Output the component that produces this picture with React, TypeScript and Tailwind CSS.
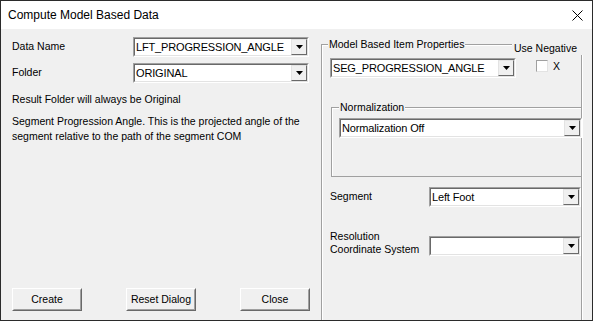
import React from "react";

const FONT = { fontFamily: '"Liberation Sans", Arial, sans-serif' };

function Arrow() {
  return (
    <svg width="7" height="4" viewBox="0 0 7 4" className="block">
      <polygon points="0,0 7,0 3.5,4" fill="#000" />
    </svg>
  );
}

type ComboProps = {
  text?: string;
  className?: string;
};

// classic sunken combo box with raised drop button
function Combo({ text = "", className = "" }: ComboProps) {
  return (
    <div
      className={`h-[20px] border border-t-[#a0a0a0] border-l-[#a0a0a0] border-b-white border-r-white ${className}`}
    >
      <div className="flex h-full border border-t-[#696969] border-l-[#696969] border-b-[#e3e3e3] border-r-[#e3e3e3] bg-white">
        <div className="flex-1 pl-[1px] text-[11px] tracking-[-0.15px] leading-[16px] text-black whitespace-nowrap overflow-hidden">
          {text}
        </div>
        <div className="w-[16px] h-full border border-t-[#e3e3e3] border-l-[#e3e3e3] border-b-[#696969] border-r-[#696969] bg-[#f0f0f0] flex items-center justify-center">
          <Arrow />
        </div>
      </div>
    </div>
  );
}

function Button({ label }: { label: string }) {
  return (
    <div className="w-[70px] h-[23px] border border-t-white border-l-white border-b-[#696969] border-r-[#696969]">
      <div className="h-full border border-transparent border-b-[#a0a0a0] border-r-[#a0a0a0] bg-[#f0f0f0] flex items-center justify-center text-[10.5px] text-black">
        {label}
      </div>
    </div>
  );
}

export default function App() {
  return (
    <div className="w-[594px] h-[323px] bg-white" style={FONT}>
      <div className="w-[593px] h-[321px] border border-[#2b2b2b] flex flex-col overflow-hidden">
        {/* Title bar */}
        <div className="h-[28px] shrink-0 bg-white flex items-center justify-between pl-[7px] pr-[8px]">
          <span className="text-[12px] text-black">Compute Model Based Data</span>
          <svg width="11" height="11" viewBox="0 0 11 11" className="mr-[1px]">
            <path d="M0.5 0.5 L10.5 10.5 M10.5 0.5 L0.5 10.5" stroke="#000" strokeWidth="1" />
          </svg>
        </div>

        {/* Body */}
        <div className="flex-1 bg-[#f0f0f0] flex overflow-hidden">
          {/* Left column */}
          <div className="w-[320px] shrink-0 flex flex-col pl-[11px] pt-[8px] pb-[9px] text-[10.5px] text-black">
            <div className="flex items-center h-[20px]">
              <span className="w-[121px]">Data Name</span>
              <Combo text="LFT_PROGRESSION_ANGLE" className="w-[176px]" />
            </div>
            <div className="flex items-center h-[20px] mt-[6px]">
              <span className="w-[121px]">Folder</span>
              <Combo text="ORIGINAL" className="w-[176px]" />
            </div>
            <p className="mt-[9px] leading-[14px]">Result Folder will always be Original</p>
            <p className="mt-[8px] leading-[15px] w-[300px]">
              Segment Progression Angle. This is the projected angle of the segment relative to the path of
              the segment COM
            </p>
            <div className="mt-auto w-[298px] flex justify-between">
              <Button label="Create" />
              <Button label="Reset Dialog" />
              <Button label="Close" />
            </div>
          </div>

          {/* Model Based Item Properties group */}
          <div className="relative mt-[15px] w-[261px] h-[320px] shrink-0 border border-[#a0a0a0] shadow-[1px_1px_0_#fff,inset_1px_1px_0_#fff] text-[10.5px] text-black">
            <span className="absolute left-[6px] top-[-8px] px-[1px] bg-[#f0f0f0] leading-[14px]">
              Model Based Item Properties
            </span>
            <span className="absolute left-[190px] top-[-4px] w-[72px] pl-[2px] bg-[#f0f0f0] leading-[14px]">
              Use Negative
            </span>

            <div className="flex items-start mt-[13px] ml-[8px]">
              <Combo text="SEG_PROGRESSION_ANGLE" className="w-[186px]" />
              <div className="ml-[20px] mt-[2px] flex items-center">
                <div className="w-[12px] h-[12px] border border-t-[#a0a0a0] border-l-[#a0a0a0] border-b-[#e3e3e3] border-r-[#e3e3e3] bg-white" />
                <span className="ml-[5px] leading-[12px] font-light">X</span>
              </div>
            </div>

            {/* Normalization group */}
            <div className="relative mt-[29px] ml-[9px] w-[251px] h-[70px] border border-[#a0a0a0] shadow-[inset_1px_1px_0_#fff]">
              <span className="absolute left-[7px] top-[-8px] px-[1px] bg-[#f0f0f0] leading-[14px]">
                Normalization
              </span>
              <Combo text="Normalization Off" className="mt-[10px] ml-[7px] w-[243px]" />
            </div>

            <div className="flex items-center mt-[10px] ml-[8px]">
              <span className="w-[99px]">Segment</span>
              <Combo text="Left Foot" className="w-[152px]" />
            </div>

            <div className="flex items-start mt-[23px] ml-[8px]">
              <span className="w-[99px] leading-[13px]">
                Resolution
                <br />
                Coordinate System
              </span>
              <Combo className="w-[152px] mt-[6px]" />
            </div>
          </div>
        </div>
      </div>
    </div>
  );
}
